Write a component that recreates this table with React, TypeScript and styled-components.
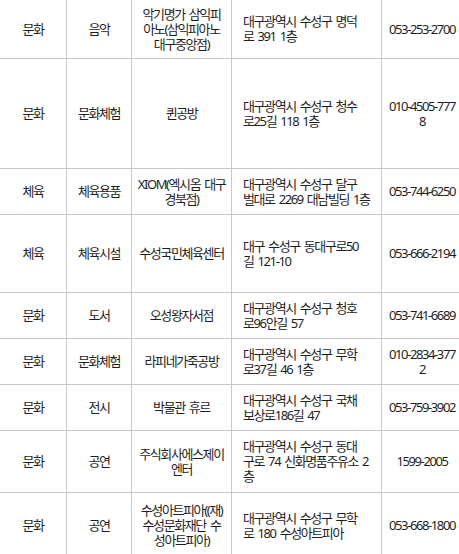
import styled, { createGlobalStyle } from "styled-components";

const GlobalStyle = createGlobalStyle`
  html, body {
    margin: 0;
    padding: 0;
    background: #ffffff;
    overflow: hidden;
  }
`;

type Place = {
  kind: string;
  sub: string;
  name: string;
  address: string;
  phone: string;
  height: number;
};

const columns = [67, 65, 100, 150, 81];

const places: Place[] = [
  {
    kind: "문화",
    sub: "음악",
    name: "악기명가 삼익피\n아노(삼익피아노\n대구중앙점)",
    address: "대구광역시 수성구 명덕\n로 391 1층",
    phone: "053-253-2700",
    height: 59,
  },
  {
    kind: "문화",
    sub: "문화체험",
    name: "퀸공방",
    address: "대구광역시 수성구 청수\n로25길 118 1층",
    phone: "010-4505-777\n8",
    height: 110,
  },
  {
    kind: "체육",
    sub: "체육용품",
    name: "XIOM(엑시옴 대구\n경북점)",
    address: "대구광역시 수성구 달구\n벌대로 2269 대남빌딩 1층",
    phone: "053-744-6250",
    height: 46,
  },
  {
    kind: "체육",
    sub: "체육시설",
    name: "수성국민체육센터",
    address: "대구 수성구 동대구로50\n길 121-10",
    phone: "053-666-2194",
    height: 78,
  },
  {
    kind: "문화",
    sub: "도서",
    name: "오성왕자서점",
    address: "대구광역시 수성구 청호\n로96안길 57",
    phone: "053-741-6689",
    height: 46,
  },
  {
    kind: "문화",
    sub: "문화체험",
    name: "라피네가죽공방",
    address: "대구광역시 수성구 무학\n로37길 46 1층",
    phone: "010-2834-377\n2",
    height: 46,
  },
  {
    kind: "문화",
    sub: "전시",
    name: "박물관 휴르",
    address: "대구광역시 수성구 국채\n보상로186길 47",
    phone: "053-759-3902",
    height: 46,
  },
  {
    kind: "문화",
    sub: "공연",
    name: "주식회사에스제이\n엔터",
    address: "대구광역시 수성구 동대\n구로 74 신화명품주유소 2\n층",
    phone: "1599-2005",
    height: 62,
  },
  {
    kind: "문화",
    sub: "공연",
    name: "수성아트피아((재)\n수성문화재단 수\n성아트피아)",
    address: "대구광역시 수성구 무학\n로 180 수성아트피아",
    phone: "053-668-1800",
    height: 66,
  },
];

const Frame = styled.div`
  width: 459px;
  height: 554px;
  overflow: hidden;
`;

const Table = styled.table`
  width: 463px;
  margin: -1px 0 0 -1px;
  border-collapse: collapse;
  table-layout: fixed;
  font-family: "Noto Sans", "Noto Sans CJK KR", sans-serif;
  font-size: 13px;
  letter-spacing: -1.4px;
  word-spacing: 2px;
  line-height: 15px;
  color: #1e1e1e;
`;

const Col = styled.col<{ $w: number }>`
  width: ${({ $w }) => $w}px;
`;

const Row = styled.tr<{ $h: number }>`
  height: ${({ $h }) => $h}px;
`;

const Cell = styled.td<{ $left?: boolean }>`
  border: 1px solid #c8c8c8;
  padding: ${({ $left }) => ($left ? "0 0 0 11px" : "0")};
  text-align: ${({ $left }) => ($left ? "left" : "center")};
  vertical-align: middle;
  white-space: pre;
  overflow: visible;
`;

export default function App() {
  return (
    <Frame>
      <GlobalStyle />
      <Table>
        <colgroup>
          {columns.map((w, i) => (
            <Col key={i} $w={w} />
          ))}
        </colgroup>
        <tbody>
          {places.map((p, i) => (
            <Row key={i} $h={p.height}>
              <Cell>{p.kind}</Cell>
              <Cell>{p.sub}</Cell>
              <Cell>{p.name}</Cell>
              <Cell $left>{p.address}</Cell>
              <Cell>{p.phone}</Cell>
            </Row>
          ))}
        </tbody>
      </Table>
    </Frame>
  );
}
